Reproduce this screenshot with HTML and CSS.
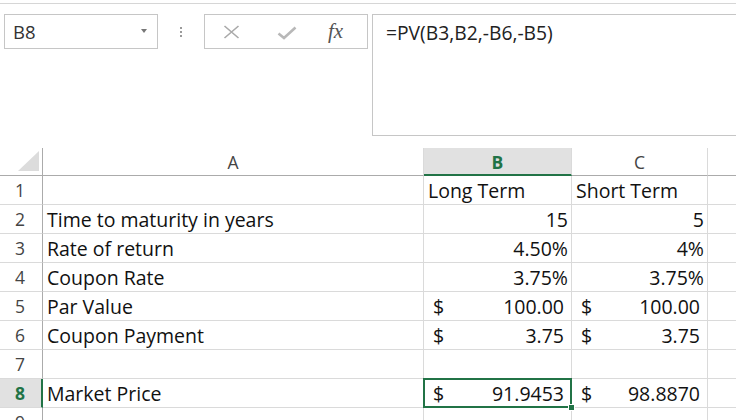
FILE: index.html
```html
<!DOCTYPE html>
<html>
<head>
<meta charset="utf-8">
<link rel="stylesheet" href="styles.css">
</head>
<body>
<div class="page">
  <div class="topline"></div>
  <div class="toolbar">
    <div class="namebox">
      <span class="name">B8</span>
      <span class="dd"></span>
    </div>
    <div class="grip"><i></i><i></i><i></i></div>
    <div class="fxbox">
      <svg class="ic-x" width="17" height="14" viewBox="0 0 17 14"><path d="M1.5 1 L15.5 13 M15.5 1 L1.5 13" stroke="#a9a9a9" stroke-width="1.6" fill="none"/></svg>
      <svg class="ic-check" width="20" height="14" viewBox="0 0 20 14"><path d="M1.5 7.5 L7 12 L18.5 1.5" stroke="#b8b8b8" stroke-width="2.6" fill="none"/></svg>
      <span class="fx">fx</span>
    </div>
    <div class="formula">=PV(B3,B2,-B6,-B5)</div>
  </div>
  <div class="sheet">
    <div class="h corner"><span class="tri"></span></div>
    <div class="h col">A</div>
    <div class="h col sel">B</div>
    <div class="h col">C</div>
    <div class="h col last"></div>

    <div class="h row">1</div>
    <div class="c"></div>
    <div class="c txt">Long Term</div>
    <div class="c txt">Short Term</div>
    <div class="c last"></div>

    <div class="h row">2</div>
    <div class="c txt">Time to maturity in years</div>
    <div class="c num">15</div>
    <div class="c num">5</div>
    <div class="c last"></div>

    <div class="h row">3</div>
    <div class="c txt">Rate of return</div>
    <div class="c num">4.50%</div>
    <div class="c num">4%</div>
    <div class="c last"></div>

    <div class="h row">4</div>
    <div class="c txt">Coupon Rate</div>
    <div class="c num">3.75%</div>
    <div class="c num">3.75%</div>
    <div class="c last"></div>

    <div class="h row">5</div>
    <div class="c txt">Par Value</div>
    <div class="c acc"><span>$</span><span>100.00</span></div>
    <div class="c acc"><span>$</span><span>100.00</span></div>
    <div class="c last"></div>

    <div class="h row">6</div>
    <div class="c txt">Coupon Payment</div>
    <div class="c acc"><span>$</span><span>3.75</span></div>
    <div class="c acc"><span>$</span><span>3.75</span></div>
    <div class="c last"></div>

    <div class="h row">7</div>
    <div class="c"></div>
    <div class="c"></div>
    <div class="c"></div>
    <div class="c last"></div>

    <div class="h row rsel">8</div>
    <div class="c txt">Market Price</div>
    <div class="c acc active"><span>$</span><span>91.9453</span><b class="handle"></b></div>
    <div class="c acc"><span>$</span><span>98.8870</span></div>
    <div class="c last"></div>

    <div class="h row">9</div>
    <div class="c"></div>
    <div class="c"></div>
    <div class="c"></div>
    <div class="c last"></div>
  </div>
</div>
</body>
</html>
```
FILE: styles.css
```css
* { box-sizing: border-box; }
html, body { margin: 0; padding: 0; background: #fff; }
body { width: 736px; height: 420px; overflow: hidden; font-family: "Open Sans", sans-serif; }
.page { width: 736px; height: 420px; overflow: hidden; }

.topline { height: 1px; margin-top: 3px; background: #d6d6d6; }

.toolbar { display: flex; align-items: flex-start; margin-top: 10px; height: 122px; }
.namebox { width: 154px; height: 35px; margin-left: 4px; border: 1px solid #c6c6c6; display: flex; align-items: center; justify-content: space-between; padding: 0 10px 0 8px; }
.name { font-size: 18.5px; color: #333; font-family: "Open Sans", sans-serif; }
.dd { width: 0; height: 0; border-left: 3.5px solid transparent; border-right: 3.5px solid transparent; border-top: 4px solid #777; margin-top: -2px; }
.grip { width: 46px; height: 35px; display: flex; flex-direction: column; align-items: center; justify-content: center; gap: 2px; }
.grip i { display: block; width: 2px; height: 2px; background: #9a9a9a; }
.fxbox { width: 164px; height: 35px; border: 1px solid #c6c6c6; display: flex; align-items: center; padding: 0 0 0 18px; }
.ic-x { margin-top: 1px; }
.ic-check { margin-left: 37px; margin-top: 3px; }
.fx { margin-left: 31px; font-family: "Liberation Serif", serif; font-style: italic; font-size: 21px; color: #555; margin-top: 0; }
.formula { flex: 1; margin-left: 4px; height: 122px; border: 1px solid #c6c6c6; border-right: none; padding: 4px 0 0 13px; font-family: "Open Sans", sans-serif; font-size: 19.3px; color: #222; }

.sheet { margin-top: 12px; display: grid; grid-template-columns: 43px 381px 148px 136px 1fr; grid-template-rows: 28px repeat(9, 29px); }
.h { color: #444; font-size: 17.5px; font-family: "Open Sans", sans-serif; display: flex; align-items: center; }
.corner { border-right: 1px solid #ababab; border-bottom: 1px solid #ababab; position: relative; }
.tri { position: absolute; right: 3px; bottom: 4px; width: 0; height: 0; border-left: 21px solid transparent; border-bottom: 20px solid #dcdcdc; }
.col { justify-content: center; border-right: 1px solid #dadada; border-bottom: 1px solid #ababab; padding-top: 1px; }
.col.last { border-right: none; }
.col.sel { background: #e1e1e1; color: #217346; font-weight: bold; border-bottom: 2px solid #217346; }
.row { justify-content: center; padding-right: 2px; border-right: 1px solid #ababab; border-bottom: 1px solid #dadada; }
.row.rsel { background: #e1e1e1; color: #217346; font-weight: bold; border-right: 2px solid #217346; padding-right: 1px; }

.c { border-right: 1px solid #dadada; border-bottom: 1px solid #dadada; font-size: 19.5px; color: #111; display: flex; align-items: center; white-space: nowrap; padding-top: 0; }
.c.last { border-right: none; }
.txt { padding-left: 4px; }
.num { justify-content: flex-end; padding-right: 3px; }
.acc { justify-content: space-between; padding-left: 9px; padding-right: 7px; }
.active { position: relative; }
.active::after { content: ""; position: absolute; left: -1px; top: -1px; right: -1px; bottom: -1px; border: 2px solid #217346; }
.handle { position: absolute; right: -4px; bottom: -4px; width: 7px; height: 7px; background: #217346; border: 1px solid #fff; z-index: 2; }
```
